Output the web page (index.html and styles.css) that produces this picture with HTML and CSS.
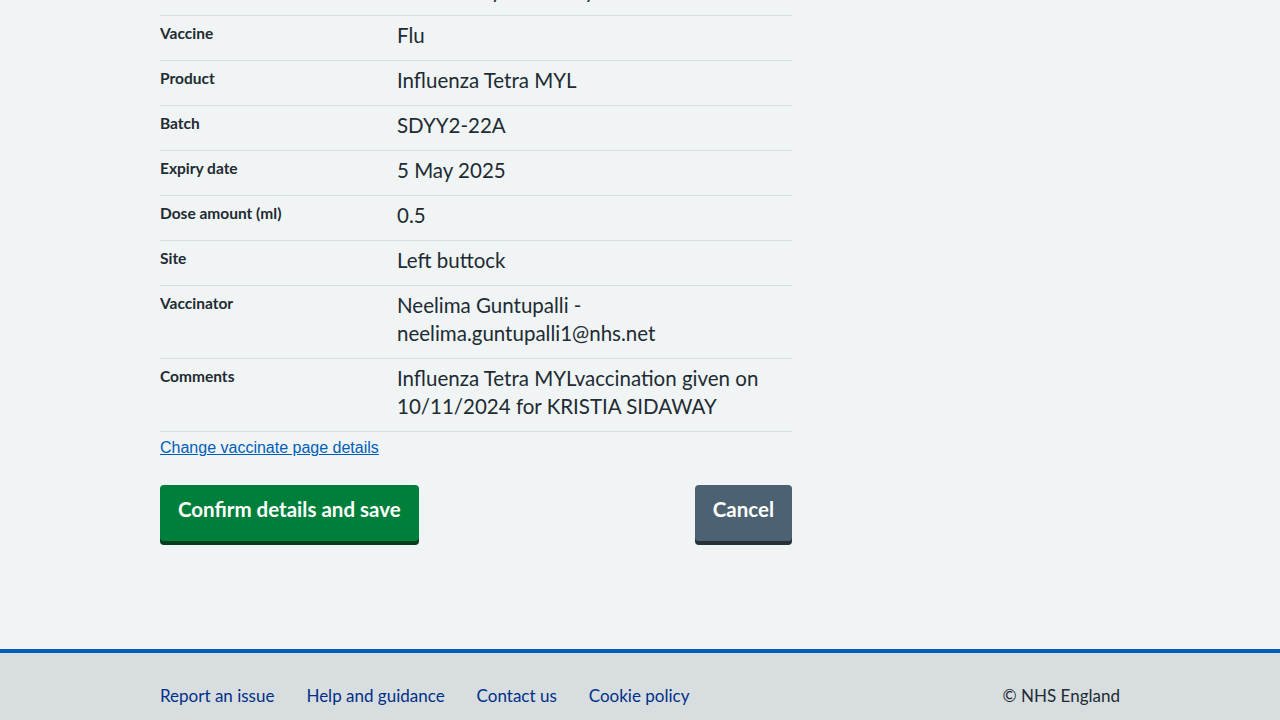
FILE: index.html
```html
<!DOCTYPE html>
<html lang="en">
<head>
<meta charset="utf-8">
<title>Check and confirm vaccination details</title>
<link rel="stylesheet" href="styles.css">
</head>
<body>
<div class="page">
  <main class="main">
    <dl class="summary">
      <div class="row"><dt>Care setting</dt><dd>Community Pharmacy</dd></div>
      <div class="row"><dt>Vaccine</dt><dd>Flu</dd></div>
      <div class="row"><dt>Product</dt><dd>Influenza Tetra MYL</dd></div>
      <div class="row"><dt>Batch</dt><dd>SDYY2-22A</dd></div>
      <div class="row"><dt>Expiry date</dt><dd>5 May 2025</dd></div>
      <div class="row"><dt>Dose amount (ml)</dt><dd>0.5</dd></div>
      <div class="row"><dt>Site</dt><dd>Left buttock</dd></div>
      <div class="row"><dt>Vaccinator</dt><dd>Neelima Guntupalli - neelima.guntupalli1@nhs.net</dd></div>
      <div class="row"><dt>Comments</dt><dd>Influenza Tetra MYLvaccination given on 10/11/2024 for KRISTIA SIDAWAY</dd></div>
    </dl>
    <p class="change"><a href="#">Change vaccinate page details</a></p>
    <div class="actions">
      <button class="btn btn-primary" type="button">Confirm details and save</button>
      <button class="btn btn-secondary" type="button">Cancel</button>
    </div>
  </main>
</div>
<footer class="footer">
  <div class="footer-inner">
    <ul class="footer-links">
      <li><a href="#">Report an issue</a></li>
      <li><a href="#">Help and guidance</a></li>
      <li><a href="#">Contact us</a></li>
      <li><a href="#">Cookie policy</a></li>
    </ul>
    <p class="copyright">© NHS England</p>
  </div>
</footer>
</body>
</html>
```
FILE: styles.css
```css
html, body {
  margin: 0;
  padding: 0;
}
body {
  background: #f0f4f5;
  color: #212b32;
  font-family: Lato, "Noto Sans", sans-serif;
  overflow: hidden;
}
.page {
  width: 960px;
  margin: 0 auto;
}
.main {
  width: 632px;
  margin-top: -29px;
  padding-bottom: 108px;
}
.summary {
  margin: 0;
}
.row {
  display: grid;
  grid-template-columns: 237px 1fr;
  border-bottom: 1px solid #d8dde0;
}
.row dt {
  font-weight: 700;
  font-size: 15.5px;
  line-height: 24px;
  padding: 5px 0 7px;
}
.row dd {
  margin: 0;
  font-size: 20.5px;
  line-height: 28px;
  padding: 5px 0 11px;
}
.change {
  margin: 4px 0 0;
  font-family: "Liberation Sans", Arial, sans-serif;
  font-size: 16px;
  line-height: 24px;
}
.change a {
  color: #005eb8;
  text-decoration: underline;
}
.actions {
  display: flex;
  justify-content: space-between;
  margin-top: 25px;
}
.btn {
  font-family: Lato, "Noto Sans", sans-serif;
  font-weight: 700;
  font-size: 20.5px;
  line-height: 28px;
  color: #ffffff;
  border: 0;
  border-radius: 4px;
  padding: 10px 18px 18px;
  height: 56px;
  cursor: pointer;
}
.btn-primary {
  background: #007f3b;
  box-shadow: 0 4px 0 #00401e;
}
.btn-secondary {
  background: #4c6272;
  box-shadow: 0 4px 0 #263139;
}
.footer {
  background: #d8dde0;
  border-top: 4px solid #005eb8;
  height: 80px;
}
.footer-inner {
  width: 960px;
  margin: 0 auto;
  display: flex;
  justify-content: space-between;
  align-items: flex-start;
  padding-top: 31px;
}
.footer-links {
  display: flex;
  gap: 32px;
  list-style: none;
  margin: 0;
  padding: 0;
}
.footer-links a {
  color: #003087;
  text-decoration: none;
  font-size: 17px;
  line-height: 24px;
}
.copyright {
  margin: 0;
  font-size: 17px;
  line-height: 24px;
  color: #212b32;
}
```
